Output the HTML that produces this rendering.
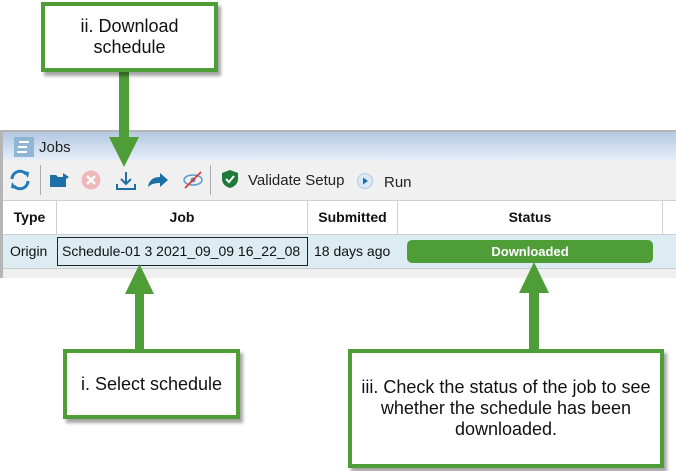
<!DOCTYPE html>
<html><head><meta charset="utf-8"><style>
*{margin:0;padding:0;box-sizing:border-box}
body{width:676px;height:471px;background:#fff;position:relative;overflow:hidden;font-family:"Liberation Sans",Arial,sans-serif}
.a{position:absolute}
.ui{font-family:"Liberation Sans",sans-serif;font-size:14px;color:#222}
.call{position:absolute;background:#fff;border:4px solid #4e9d37;box-shadow:3px 4px 3px rgba(0,0,0,.35);display:flex;align-items:center;justify-content:center;text-align:center;font-size:18px;color:#111;line-height:21px}
.hd{position:absolute;top:200px;height:35px;line-height:35px;text-align:center;font-weight:bold;font-size:14px;color:#111;border-right:1px solid #cfcfdc}
.cell{position:absolute;top:235px;height:33px;line-height:33px;font-size:14px;color:#111}
</style></head><body>
<div class="a" style="left:0;top:130px;width:676px;height:2px;background:#b5b5b5"></div>
<div class="a" style="left:0;top:130px;width:3px;height:148px;background:#b5b5b5"></div>
<div class="a" style="left:3px;top:132px;width:673px;height:28px;background:linear-gradient(#b3c8e2,#e6eef9)"></div>
<div class="a" style="left:14px;top:137px;width:20px;height:20px;background:#8fb6d4"></div>
<div class="a" style="left:19px;top:141px;width:10px;height:2px;background:#fff"></div>
<div class="a" style="left:18px;top:146px;width:9px;height:2px;background:#fff"></div>
<div class="a" style="left:17px;top:151px;width:10px;height:2px;background:#fff"></div>
<div class="a ui" style="left:39px;top:139px;font-size:15px">Jobs</div>
<div class="a" style="left:3px;top:160px;width:673px;height:40px;background:#f0f0f0"></div>
<svg class="a" style="left:8px;top:168px" width="24" height="24" viewBox="0 0 24 24"><path d="M4 11a8 8 0 0 1 14-5" stroke="#1f7ab8" stroke-width="3" fill="none"/><path d="M20 13a8 8 0 0 1-14 5" stroke="#1f7ab8" stroke-width="3" fill="none"/><path d="M15 3l6 1-1 6z M9 21l-6-1 1-6z" fill="#1f7ab8"/></svg>
<div class="a" style="left:40px;top:165px;width:1px;height:30px;background:#aaa"></div>
<svg class="a" style="left:49px;top:172px" width="22" height="16" viewBox="0 0 22 16"><path d="M1 3h6l2 2h8v10H1z" fill="#1d6fa8"/><path d="M14 1l6 4-6 4z" fill="#1d6fa8"/></svg>
<svg class="a" style="left:81px;top:170px" width="20" height="20"><circle cx="10" cy="10" r="9.5" fill="#f0b9b9"/><path d="M6 6l8 8M14 6l-8 8" stroke="#fff" stroke-width="2.5"/></svg>
<svg class="a" style="left:115px;top:170px" width="22" height="22" viewBox="0 0 22 22"><path d="M11 2v12M6 9l5 5 5-5" stroke="#1d6fa8" stroke-width="2" fill="none"/><path d="M2 14v5h18v-5" stroke="#1d6fa8" stroke-width="2" fill="none"/></svg>
<svg class="a" style="left:147px;top:172px" width="22" height="16" viewBox="0 0 22 16"><path d="M1 15C2 7 8 5 13 5V1l8 7-8 7v-4C8 11 4 12 1 15z" fill="#1d6fa8"/></svg>
<svg class="a" style="left:182px;top:170px" width="22" height="20" viewBox="0 0 22 20"><ellipse cx="11" cy="10" rx="9" ry="5" stroke="#5b9ad0" stroke-width="1.5" fill="none"/><circle cx="11" cy="10" r="2.5" fill="#5b9ad0"/><path d="M3 18L19 2" stroke="#e03030" stroke-width="1.6"/></svg>
<div class="a" style="left:210px;top:165px;width:1px;height:30px;background:#aaa"></div>
<svg class="a" style="left:222px;top:170px" width="16" height="18" viewBox="0 0 16 18"><path d="M8 0l8 3v6c0 5-4 8-8 9-4-1-8-4-8-9V3z" fill="#1f7a3a"/><path d="M4 9l3 3 5-6" stroke="#fff" stroke-width="2" fill="none"/></svg>
<div class="a ui" style="left:248px;top:172px;font-size:15px">Validate Setup</div>
<svg class="a" style="left:357px;top:173px" width="16" height="16"><circle cx="8" cy="8" r="7.5" fill="#dbe8f5" stroke="#b0c8e2"/><path d="M6 4.5l5 3.5-5 3.5z" fill="#1d6fa8"/></svg>
<div class="a ui" style="left:384px;top:174px;font-size:15px">Run</div>
<div class="a" style="left:3px;top:200px;width:673px;height:35px;background:#fff;border-top:1px solid #cfcfdc;border-bottom:1px solid #cfcfdc"></div>
<div class="hd" style="left:3px;width:54px">Type</div>
<div class="hd" style="left:57px;width:251px">Job</div>
<div class="hd" style="left:308px;width:90px">Submitted</div>
<div class="hd" style="left:398px;width:265px">Status</div>
<div class="a" style="left:3px;top:235px;width:673px;height:33px;background:#ddebf3"></div>
<div class="cell" style="left:10px">Origin</div>
<div class="a" style="left:57px;top:237px;width:251px;height:29px;border:1px solid #222"></div>
<div class="cell" style="left:62px">Schedule-01 3 2021_09_09 16_22_08</div>
<div class="cell" style="left:314px">18 days ago</div>
<div class="a" style="left:407px;top:240px;width:246px;height:23px;background:#4e9d37;border-radius:5px;color:#fff;font-weight:bold;font-size:13px;text-align:center;line-height:23px">Downloaded</div>
<div class="a" style="left:3px;top:268px;width:673px;height:10px;background:#efefef;border-top:1px solid #ccc"></div>
<div class="a" style="left:119px;top:72px;width:10px;height:67px;background:#4e9d37"></div>
<svg class="a" style="left:109px;top:137px" width="30" height="30"><path d="M0 0h30L15 30z" fill="#4e9d37"/></svg>
<div class="a" style="left:135px;top:292px;width:9px;height:60px;background:#4e9d37"></div>
<svg class="a" style="left:125px;top:264px" width="29" height="30"><path d="M0 30h29L14.5 0z" fill="#4e9d37"/></svg>
<div class="a" style="left:529px;top:292px;width:10px;height:60px;background:#4e9d37"></div>
<svg class="a" style="left:519px;top:262px" width="30" height="31"><path d="M0 31h30L15 0z" fill="#4e9d37"/></svg>
<div class="call" style="left:41px;top:2px;width:177px;height:70px">ii. Download<br>schedule</div>
<div class="call" style="left:63px;top:349px;width:177px;height:70px">i. Select schedule</div>
<div class="call" style="left:348px;top:349px;width:316px;height:119px">iii. Check the status of the job to see<br>whether the schedule has been<br>downloaded.</div>
</body></html>
